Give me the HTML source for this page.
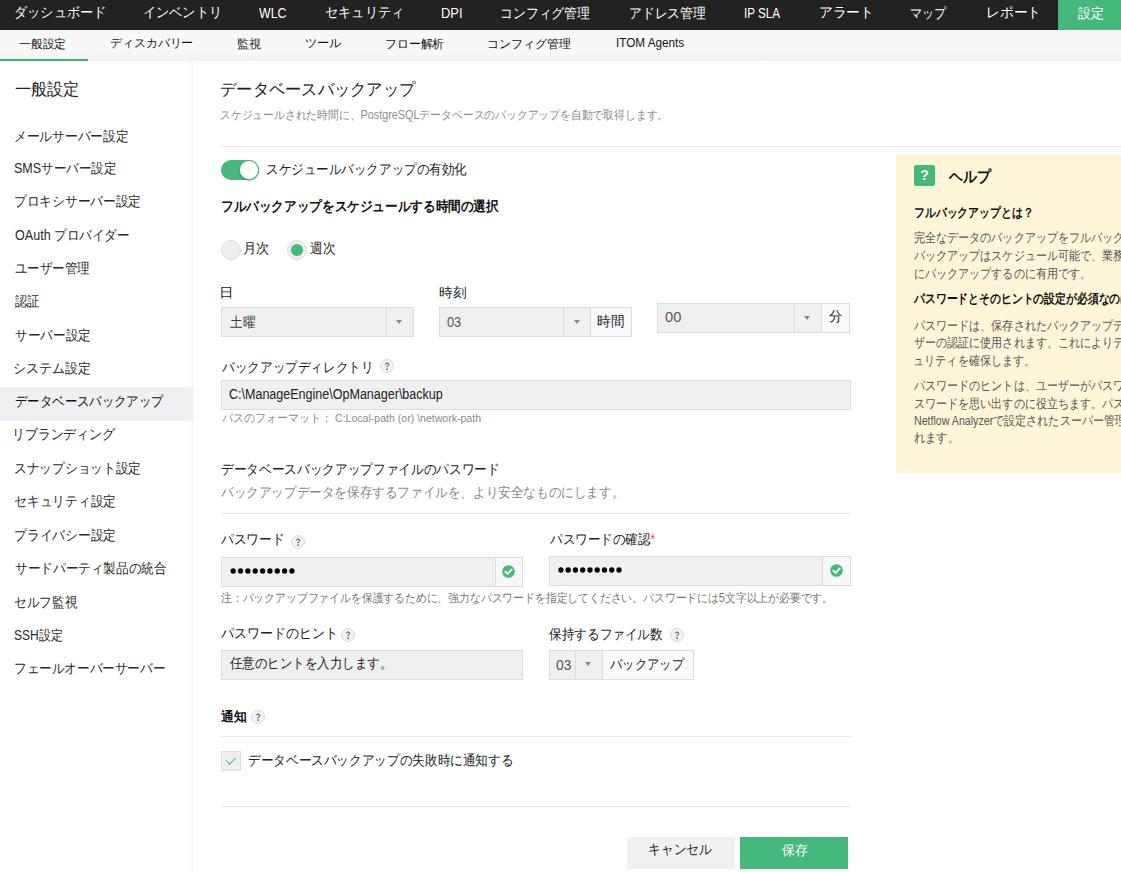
<!DOCTYPE html>
<html><head><meta charset="utf-8">
<style>
*{margin:0;padding:0;box-sizing:border-box}
html,body{width:1121px;height:872px;overflow:hidden;background:#fff}
body{font-family:"Liberation Sans",sans-serif;color:#222;position:relative}
.t{position:absolute;white-space:nowrap;transform-origin:0 50%}
.b{position:absolute}
.inp{position:absolute;background:#f0f0f0;border:1px solid #dcdcdc}
.q{position:absolute;width:15px;height:14px;border-radius:50%;background:#f2f2f2;border:1px solid #dddddd}
.q::after{content:"?";position:absolute;left:0;right:0;top:1px;text-align:center;font-size:8px;line-height:10px;font-weight:bold;color:#333}
.hr{position:absolute;height:1px;background:#e8e8e8}
.arr{position:absolute;width:0;height:0;border-left:3px solid transparent;border-right:3px solid transparent;border-top:4px solid #8a8a8a}
</style></head><body>
<div class="b" style="left:0;top:0;width:1121px;height:30px;background:#222"></div>
<div class="b" style="left:1058px;top:0;width:63px;height:30px;background:#45b97c"></div>
<div class="b" style="left:0;top:30px;width:1121px;height:31px;background:linear-gradient(#f8f8f8 0,#f8f8f8 24px,#f0f0f0 31px)"></div>
<div class="b" style="left:0;top:59px;width:88px;height:2px;background:#3fb06f"></div>
<div class="b" style="left:186px;top:61px;width:8px;height:811px;background:linear-gradient(90deg,rgba(0,0,0,0) 0,rgba(0,0,0,0.035) 100%)"></div>
<div class="b" style="left:0;top:387px;width:193px;height:34px;background:#f0f0f2"></div>
<div class="hr" style="left:221px;top:146px;width:900px"></div>
<!-- toggle -->
<div class="b" style="left:221px;top:160px;width:38px;height:20px;border-radius:10px;background:#45b97c"></div>
<div class="b" style="left:239px;top:160px;width:20px;height:20px;border-radius:50%;background:#fff;box-shadow:0 1px 1.5px rgba(0,0,0,0.3);border:1px solid #45b97c"></div>
<!-- radios -->
<div class="b" style="left:221px;top:240px;width:20px;height:20px;border-radius:50%;background:#eee;border:1px solid #dcdcdc"></div>
<div class="b" style="left:287px;top:240px;width:20px;height:20px;border-radius:50%;background:#eee;border:1px solid #dcdcdc"></div>
<div class="b" style="left:291px;top:244px;width:11.5px;height:11.5px;border-radius:50%;background:#45b97c"></div>
<!-- selects -->
<div class="inp" style="left:221px;top:307px;width:193px;height:30px"></div>
<div class="b" style="left:386px;top:307px;width:1px;height:30px;background:#dcdcdc"></div>
<div class="arr" style="left:396px;top:320px"></div>
<div class="inp" style="left:439px;top:307px;width:193px;height:30px"></div>
<div class="b" style="left:563px;top:307px;width:1px;height:30px;background:#dcdcdc"></div>
<div class="b" style="left:590px;top:308px;width:41px;height:28px;background:#f9f9fb;border-left:1px solid #dcdcdc"></div>
<div class="arr" style="left:574px;top:320px"></div>
<div class="inp" style="left:657px;top:303px;width:193px;height:30px"></div>
<div class="b" style="left:794px;top:303px;width:1px;height:30px;background:#dcdcdc"></div>
<div class="b" style="left:821px;top:304px;width:28px;height:28px;background:#f9f9fb;border-left:1px solid #dcdcdc"></div>
<div class="arr" style="left:804px;top:316px"></div>
<!-- directory -->
<svg class="b" style="left:379.5px;top:358.5px" width="14" height="14" viewBox="0 0 14 14"><circle cx="7" cy="7" r="6.5" fill="#f2f2f2" stroke="#dadada" stroke-width="1"/><path d="M5.4 5.3 C5.5 3.7 8.8 3.7 8.7 5.4 C8.6 6.5 7.1 6.6 7.1 8.3" stroke="#2a2a2a" stroke-width="0.95" fill="none"/><rect x="6.45" y="9.5" width="1.3" height="1.3" fill="#2a2a2a"/></svg>
<div class="inp" style="left:221px;top:380px;width:630px;height:30px"></div>
<div class="hr" style="left:221px;top:513px;width:630px"></div>
<!-- password -->
<svg class="b" style="left:291px;top:535px" width="14" height="14" viewBox="0 0 14 14"><circle cx="7" cy="7" r="6.5" fill="#f2f2f2" stroke="#dadada" stroke-width="1"/><path d="M5.4 5.3 C5.5 3.7 8.8 3.7 8.7 5.4 C8.6 6.5 7.1 6.6 7.1 8.3" stroke="#2a2a2a" stroke-width="0.95" fill="none"/><rect x="6.45" y="9.5" width="1.3" height="1.3" fill="#2a2a2a"/></svg>
<div class="inp" style="left:221px;top:557px;width:302px;height:30px"></div>
<div class="b" style="left:495px;top:558px;width:27px;height:28px;background:#f8f8fa;border-left:1px solid #dcdcdc"></div>
<svg class="b" style="left:502px;top:565px" width="13" height="13" viewBox="0 0 13 13"><circle cx="6.5" cy="6.5" r="6.3" fill="#45b97c"/><path d="M3.4 6.7 L5.6 8.8 L9.6 4.6" stroke="#fff" stroke-width="1.9" fill="none" stroke-linecap="round" stroke-linejoin="round"/></svg>
<div class="inp" style="left:549px;top:556px;width:302px;height:30px"></div>
<div class="b" style="left:822px;top:557px;width:28px;height:28px;background:#f8f8fa;border-left:1px solid #dcdcdc"></div>
<svg class="b" style="left:830px;top:564px" width="13" height="13" viewBox="0 0 13 13"><circle cx="6.5" cy="6.5" r="6.3" fill="#45b97c"/><path d="M3.4 6.7 L5.6 8.8 L9.6 4.6" stroke="#fff" stroke-width="1.9" fill="none" stroke-linecap="round" stroke-linejoin="round"/></svg>
<svg class="b" style="left:228px;top:566px" width="72" height="10" viewBox="0 0 72 10"><g fill="#000"><circle cx="5.20" cy="5" r="2.65"/><circle cx="12.54" cy="5" r="2.65"/><circle cx="19.88" cy="5" r="2.65"/><circle cx="27.22" cy="5" r="2.65"/><circle cx="34.56" cy="5" r="2.65"/><circle cx="41.90" cy="5" r="2.65"/><circle cx="49.24" cy="5" r="2.65"/><circle cx="56.58" cy="5" r="2.65"/><circle cx="63.92" cy="5" r="2.65"/></g></svg>
<svg class="b" style="left:556px;top:565px" width="72" height="10" viewBox="0 0 72 10"><g fill="#000"><circle cx="4.90" cy="5" r="2.65"/><circle cx="12.16" cy="5" r="2.65"/><circle cx="19.42" cy="5" r="2.65"/><circle cx="26.68" cy="5" r="2.65"/><circle cx="33.94" cy="5" r="2.65"/><circle cx="41.20" cy="5" r="2.65"/><circle cx="48.46" cy="5" r="2.65"/><circle cx="55.72" cy="5" r="2.65"/><circle cx="62.98" cy="5" r="2.65"/></g></svg>
<!-- hint -->
<svg class="b" style="left:341.3px;top:628.3px" width="14" height="14" viewBox="0 0 14 14"><circle cx="7" cy="7" r="6.5" fill="#f2f2f2" stroke="#dadada" stroke-width="1"/><path d="M5.4 5.3 C5.5 3.7 8.8 3.7 8.7 5.4 C8.6 6.5 7.1 6.6 7.1 8.3" stroke="#2a2a2a" stroke-width="0.95" fill="none"/><rect x="6.45" y="9.5" width="1.3" height="1.3" fill="#2a2a2a"/></svg>
<div class="inp" style="left:221px;top:650px;width:302px;height:30px"></div>
<svg class="b" style="left:669.5px;top:628.3px" width="14" height="14" viewBox="0 0 14 14"><circle cx="7" cy="7" r="6.5" fill="#f2f2f2" stroke="#dadada" stroke-width="1"/><path d="M5.4 5.3 C5.5 3.7 8.8 3.7 8.7 5.4 C8.6 6.5 7.1 6.6 7.1 8.3" stroke="#2a2a2a" stroke-width="0.95" fill="none"/><rect x="6.45" y="9.5" width="1.3" height="1.3" fill="#2a2a2a"/></svg>
<div class="inp" style="left:549px;top:650px;width:145px;height:30px"></div>
<div class="b" style="left:575px;top:650px;width:1px;height:30px;background:#dcdcdc"></div>
<div class="b" style="left:602px;top:651px;width:91px;height:28px;background:#f9f9fb;border-left:1px solid #dcdcdc"></div>
<div class="arr" style="left:585px;top:662px"></div>
<!-- notify -->
<svg class="b" style="left:250.5px;top:709.5px" width="14" height="14" viewBox="0 0 14 14"><circle cx="7" cy="7" r="6.5" fill="#f2f2f2" stroke="#dadada" stroke-width="1"/><path d="M5.4 5.3 C5.5 3.7 8.8 3.7 8.7 5.4 C8.6 6.5 7.1 6.6 7.1 8.3" stroke="#2a2a2a" stroke-width="0.95" fill="none"/><rect x="6.45" y="9.5" width="1.3" height="1.3" fill="#2a2a2a"/></svg>
<div class="hr" style="left:221px;top:736px;width:630px"></div>
<div class="b" style="left:221px;top:751px;width:20px;height:20px;background:#efefef;border:1px solid #dcdcdc"></div>
<svg class="b" style="left:221px;top:751px" width="20" height="20" viewBox="0 0 20 20"><path d="M5 9.1 L8.5 13.4 L14.8 6.6" stroke="#5ec590" stroke-width="1.15" fill="none"/></svg>
<div class="hr" style="left:221px;top:806px;width:630px"></div>
<!-- buttons -->
<div class="b" style="left:627px;top:837px;width:108px;height:32px;background:#f1f1f1"></div>
<div class="b" style="left:740px;top:837px;width:108px;height:32px;background:#45b97c"></div>
<!-- help -->
<div class="b" style="left:896px;top:154px;width:225px;height:319px;background:#fff5d8"></div>
<div class="b" style="left:914px;top:165px;width:21px;height:21px;border-radius:2px;background:#45b97c;color:#fff;font-weight:bold;font-size:14px;line-height:21px;text-align:center">?</div>

<div class="t" style="left:13.61px;top:3.10px;font-size:14px;line-height:18px;color:#fff;transform:scaleX(0.9457);">ダッシュボード</div>
<div class="t" style="left:142.76px;top:2.60px;font-size:14px;line-height:18px;color:#fff;transform:scaleX(0.9400);">インベントリ</div>
<div class="t" style="left:259.00px;top:3.60px;font-size:14px;line-height:18px;color:#fff;transform:scaleX(0.8806);">WLC</div>
<div class="t" style="left:324.56px;top:2.60px;font-size:14px;line-height:18px;color:#fff;transform:scaleX(0.9437);">セキュリティ</div>
<div class="t" style="left:440.68px;top:3.60px;font-size:14px;line-height:18px;color:#fff;transform:scaleX(0.9227);">DPI</div>
<div class="t" style="left:500.17px;top:3.60px;font-size:14px;line-height:18px;color:#fff;transform:scaleX(0.9167);">コンフィグ管理</div>
<div class="t" style="left:628.79px;top:3.60px;font-size:14px;line-height:18px;color:#fff;transform:scaleX(0.9120);">アドレス管理</div>
<div class="t" style="left:744.17px;top:3.60px;font-size:14px;line-height:18px;color:#fff;transform:scaleX(0.8326);">IP SLA</div>
<div class="t" style="left:819.02px;top:2.60px;font-size:14px;line-height:18px;color:#fff;transform:scaleX(0.9808);">アラート</div>
<div class="t" style="left:909.73px;top:3.60px;font-size:14px;line-height:18px;color:#fff;transform:scaleX(0.8667);">マップ</div>
<div class="t" style="left:986.03px;top:3.10px;font-size:14px;line-height:18px;color:#fff;transform:scaleX(0.9863);">レポート</div>
<div class="t" style="left:1077.60px;top:3.60px;font-size:14px;line-height:18px;color:#fff;transform:scaleX(0.9296);">設定</div>
<div class="t" style="left:18.70px;top:35.50px;font-size:12px;line-height:16px;color:#111;transform:scaleX(0.9851);">一般設定</div>
<div class="t" style="left:109.51px;top:35.00px;font-size:12px;line-height:16px;color:#111;transform:scaleX(0.9927);">ディスカバリー</div>
<div class="t" style="left:236.58px;top:35.50px;font-size:12px;line-height:16px;color:#111;transform:scaleX(1.0174);">監視</div>
<div class="t" style="left:304.58px;top:35.00px;font-size:12px;line-height:16px;color:#111;transform:scaleX(1.0171);">ツール</div>
<div class="t" style="left:385.01px;top:35.50px;font-size:12px;line-height:16px;color:#111;transform:scaleX(0.9864);">フロー解析</div>
<div class="t" style="left:487.01px;top:35.50px;font-size:12px;line-height:16px;color:#111;transform:scaleX(0.9939);">コンフィグ管理</div>
<div class="t" style="left:615.62px;top:34.50px;font-size:12px;line-height:16px;color:#111;transform:scaleX(0.9768);">ITOM Agents</div>
<div class="t" style="left:14.60px;top:79.30px;font-size:17px;line-height:22px;color:#222;transform:scaleX(0.9493);">一般設定</div>
<div class="t" style="left:13.69px;top:126.50px;font-size:14px;line-height:18px;color:#2a2a2a;transform:scaleX(0.9097);">メールサーバー設定</div>
<div class="t" style="left:13.71px;top:159.30px;font-size:14px;line-height:18px;color:#2a2a2a;transform:scaleX(0.8946);">SMSサーバー設定</div>
<div class="t" style="left:13.69px;top:192.20px;font-size:14px;line-height:18px;color:#2a2a2a;transform:scaleX(0.9087);">プロキシサーバー設定</div>
<div class="t" style="left:14.60px;top:225.70px;font-size:14px;line-height:18px;color:#2a2a2a;transform:scaleX(0.8976);">OAuth プロバイダー</div>
<div class="t" style="left:14.60px;top:259.10px;font-size:14px;line-height:18px;color:#2a2a2a;transform:scaleX(0.8917);">ユーザー管理</div>
<div class="t" style="left:14.60px;top:292.30px;font-size:14px;line-height:18px;color:#2a2a2a;transform:scaleX(0.8750);">認証</div>
<div class="t" style="left:14.60px;top:325.90px;font-size:14px;line-height:18px;color:#2a2a2a;transform:scaleX(0.9024);">サーバー設定</div>
<div class="t" style="left:12.75px;top:358.80px;font-size:14px;line-height:18px;color:#2a2a2a;transform:scaleX(0.9247);">システム設定</div>
<div class="t" style="left:14.60px;top:392.40px;font-size:14px;line-height:18px;color:#111;transform:scaleX(0.8840);">データベースバックアップ</div>
<div class="t" style="left:11.84px;top:425.30px;font-size:14px;line-height:18px;color:#2a2a2a;transform:scaleX(0.9193);">リブランディング</div>
<div class="t" style="left:13.69px;top:458.70px;font-size:14px;line-height:18px;color:#2a2a2a;transform:scaleX(0.9087);">スナップショット設定</div>
<div class="t" style="left:13.69px;top:492.10px;font-size:14px;line-height:18px;color:#2a2a2a;transform:scaleX(0.9109);">セキュリティ設定</div>
<div class="t" style="left:13.69px;top:525.70px;font-size:14px;line-height:18px;color:#2a2a2a;transform:scaleX(0.9109);">プライバシー設定</div>
<div class="t" style="left:14.60px;top:559.30px;font-size:14px;line-height:18px;color:#2a2a2a;transform:scaleX(0.9018);">サードパーティ製品の統合</div>
<div class="t" style="left:13.70px;top:592.50px;font-size:14px;line-height:18px;color:#2a2a2a;transform:scaleX(0.9043);">セルフ監視</div>
<div class="t" style="left:13.74px;top:625.50px;font-size:14px;line-height:18px;color:#2a2a2a;transform:scaleX(0.8582);">SSH設定</div>
<div class="t" style="left:13.70px;top:659.10px;font-size:14px;line-height:18px;color:#2a2a2a;transform:scaleX(0.9000);">フェールオーバーサーバー</div>
<div class="t" style="left:219.54px;top:78.80px;font-size:17px;line-height:22px;color:#222;transform:scaleX(0.9559);">データベースバックアップ</div>
<div class="t" style="left:220.10px;top:106.50px;font-size:12px;line-height:16px;color:#8c8c8c;transform:scaleX(0.9010);">スケジュールされた時間に、PostgreSQLデータベースのバックアップを自動で取得します。</div>
<div class="t" style="left:265.70px;top:159.90px;font-size:14px;line-height:18px;color:#222;transform:scaleX(0.8969);">スケジュールバックアップの有効化</div>
<div class="t" style="left:220.80px;top:196.50px;font-size:14px;line-height:18px;color:#111;font-weight:bold;transform:scaleX(0.9016);">フルバックアップをスケジュールする時間の選択</div>
<div class="t" style="left:242.75px;top:238.80px;font-size:14px;line-height:18px;color:#222;transform:scaleX(0.9538);">月次</div>
<div class="t" style="left:309.70px;top:238.80px;font-size:14px;line-height:18px;color:#222;transform:scaleX(0.9000);">週次</div>
<div class="t" style="left:219.46px;top:283.60px;font-size:13px;line-height:17px;color:#222;transform:scaleX(1.1222);">日</div>
<div class="t" style="left:438.50px;top:284.10px;font-size:13px;line-height:17px;color:#222;transform:scaleX(1.0500);">時刻</div>
<div class="t" style="left:230.00px;top:312.50px;font-size:14px;line-height:18px;color:#3a3a3a;transform:scaleX(0.9036);">土曜</div>
<div class="t" style="left:447.00px;top:313.00px;font-size:14px;line-height:18px;color:#555;transform:scaleX(0.9133);">03</div>
<div class="t" style="left:596.83px;top:312.30px;font-size:14px;line-height:18px;color:#222;transform:scaleX(0.9692);">時間</div>
<div class="t" style="left:664.50px;top:307.50px;font-size:14px;line-height:18px;color:#555;transform:scaleX(1.0467);">00</div>
<div class="t" style="left:829.40px;top:307.30px;font-size:14px;line-height:18px;color:#222;transform:scaleX(0.9538);">分</div>
<div class="t" style="left:221.70px;top:357.70px;font-size:14px;line-height:18px;color:#222;transform:scaleX(0.9024);">バックアップディレクトリ</div>
<div class="t" style="left:228.90px;top:385.20px;font-size:14px;line-height:18px;color:#222;transform:scaleX(0.8946);">C:\ManageEngine\OpManager\backup</div>
<div class="t" style="left:221.70px;top:410.50px;font-size:11.5px;line-height:15px;color:#8a8a8a;transform:scaleX(0.9174);">パスのフォーマット： C:Local-path (or) \network-path</div>
<div class="t" style="left:221.40px;top:460.30px;font-size:14px;line-height:18px;color:#222;transform:scaleX(0.9049);">データベースバックアップファイルのパスワード</div>
<div class="t" style="left:221.40px;top:482.60px;font-size:14px;line-height:18px;color:#8a8a8a;transform:scaleX(0.9000);">バックアップデータを保存するファイルを、より安全なものにします。</div>
<div class="t" style="left:221.40px;top:530.10px;font-size:14px;line-height:18px;color:#222;transform:scaleX(0.9059);">パスワード</div>
<div class="t" style="left:549.70px;top:530.10px;font-size:14px;line-height:18px;color:#222;transform:scaleX(0.8955);">パスワードの確認<span style="color:#e8564d">*</span></div>
<div class="t" style="left:221.40px;top:589.50px;font-size:12px;line-height:16px;color:#777;transform:scaleX(0.9019);">注：バックアップファイルを保護するために、強力なパスワードを指定してください。パスワードには5文字以上が必要です。</div>
<div class="t" style="left:221.20px;top:623.80px;font-size:14px;line-height:18px;color:#222;transform:scaleX(0.9244);">パスワードのヒント</div>
<div class="t" style="left:230.00px;top:653.80px;font-size:14px;line-height:18px;color:#222;transform:scaleX(0.8902);">任意のヒントを入力します。</div>
<div class="t" style="left:549.00px;top:624.80px;font-size:14px;line-height:18px;color:#222;transform:scaleX(0.9024);">保持するファイル数</div>
<div class="t" style="left:555.70px;top:655.50px;font-size:14px;line-height:18px;color:#555;transform:scaleX(0.9800);">03</div>
<div class="t" style="left:610.00px;top:654.80px;font-size:14px;line-height:18px;color:#222;transform:scaleX(0.8824);">バックアップ</div>
<div class="t" style="left:221.00px;top:708.00px;font-size:13px;line-height:17px;color:#111;font-weight:bold;transform:scaleX(0.9880);">通知</div>
<div class="t" style="left:247.90px;top:751.30px;font-size:14px;line-height:18px;color:#222;transform:scaleX(0.9027);">データベースバックアップの失敗時に通知する</div>
<div class="t" style="left:648.49px;top:840.30px;font-size:14px;line-height:18px;color:#222;transform:scaleX(0.9145);">キャンセル</div>
<div class="t" style="left:781.60px;top:840.80px;font-size:14px;line-height:18px;color:#fff;transform:scaleX(0.9143);">保存</div>
<div class="t" style="left:949.20px;top:165.80px;font-size:16px;line-height:21px;color:#111;font-weight:bold;transform:scaleX(0.8694);">ヘルプ</div>
<div class="t" style="left:913.56px;top:204.50px;font-size:12.5px;line-height:16px;color:#111;font-weight:bold;transform:scaleX(0.8353);">フルバックアップとは？</div>
<div class="t" style="left:913.55px;top:229.90px;font-size:12.5px;line-height:16px;color:#555;transform:scaleX(0.8505);">完全なデータのバックアップをフルバックアップと呼びます。</div>
<div class="t" style="left:914.40px;top:248.10px;font-size:12.5px;line-height:16px;color:#555;transform:scaleX(0.8505);">バックアップはスケジュール可能で、業務時間外に定期的</div>
<div class="t" style="left:913.55px;top:265.70px;font-size:12.5px;line-height:16px;color:#555;transform:scaleX(0.8505);">にバックアップするのに有用です。</div>
<div class="t" style="left:914.40px;top:291.00px;font-size:12.5px;line-height:16px;color:#111;font-weight:bold;transform:scaleX(0.8353);">パスワードとそのヒントの設定が必須なのはなぜ？</div>
<div class="t" style="left:914.40px;top:317.50px;font-size:12.5px;line-height:16px;color:#555;transform:scaleX(0.8505);">パスワードは、保存されたバックアップデータのユー</div>
<div class="t" style="left:914.40px;top:335.00px;font-size:12.5px;line-height:16px;color:#555;transform:scaleX(0.8505);">ザーの認証に使用されます。これによりデータのセキ</div>
<div class="t" style="left:912.68px;top:352.50px;font-size:12.5px;line-height:16px;color:#555;transform:scaleX(0.8576);">ュリティを確保します。</div>
<div class="t" style="left:914.40px;top:378.00px;font-size:12.5px;line-height:16px;color:#555;transform:scaleX(0.8505);">パスワードのヒントは、ユーザーがパスワードを忘れた時にパ</div>
<div class="t" style="left:913.55px;top:395.70px;font-size:12.5px;line-height:16px;color:#555;transform:scaleX(0.8505);">スワードを思い出すのに役立ちます。パスワードは</div>
<div class="t" style="left:913.55px;top:412.60px;font-size:12.5px;line-height:16px;color:#555;transform:scaleX(0.8505);">Netflow Analyzerで設定されたスーパー管理者に送信さ</div>
<div class="t" style="left:914.40px;top:430.30px;font-size:12.5px;line-height:16px;color:#555;transform:scaleX(0.8651);">れます。</div>
</body></html>
